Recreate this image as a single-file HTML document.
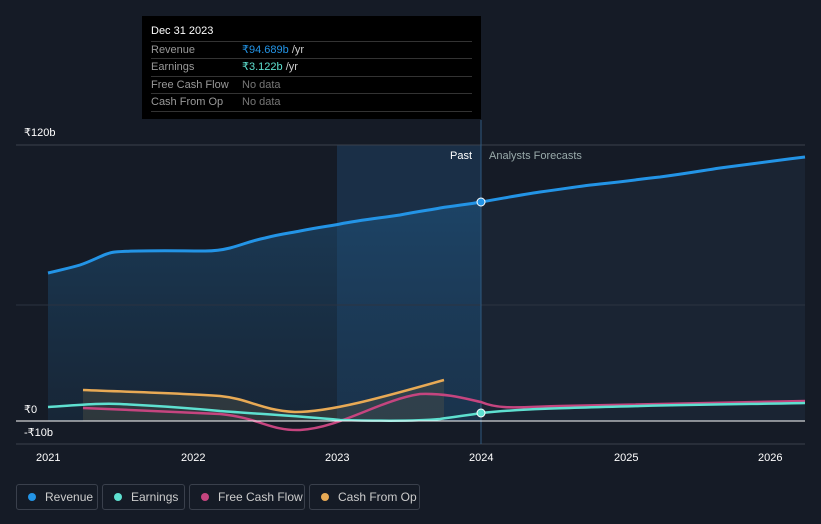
<!DOCTYPE html>
<html><head><style>
body{margin:0;background:#151b26;width:821px;height:524px;overflow:hidden;font-family:"Liberation Sans",sans-serif;}
.tt{position:absolute;left:142px;top:16px;width:339px;height:103px;background:#000;color:#ccc;font-size:11px}
.tt .h{color:#fff;font-size:11px;position:absolute;left:9px;top:9px}
.row{position:absolute;left:9px;width:321px;height:17px;border-top:1px solid #333;line-height:17px;color:#999}
.row span{position:absolute;left:91px}
.leg{position:absolute;top:484px;height:26px;border:1px solid #3a404c;border-radius:3px;color:#ccc;font-size:12px;line-height:24px;box-sizing:border-box}
.leg i{position:absolute;left:11px;top:8px;width:8px;height:8px;border-radius:50%}
.leg b{font-weight:normal;position:absolute;left:28px}
.ax{position:absolute;color:#fff;font-size:11px}
</style></head><body>
<svg width="821" height="524" style="position:absolute;left:0;top:0">
<defs><linearGradient id="g" x1="0" y1="0" x2="0" y2="1"><stop offset="0" stop-color="#1f5580" stop-opacity=".9"/><stop offset="1" stop-color="#1b3a55" stop-opacity=".6"/></linearGradient></defs>
<rect x="337" y="145" width="144" height="276" fill="#1b3550" opacity=".8"/>
<path d="M48,273 C60,270 70,268 80,265 C95,260 105,253 115,252 C140,250 180,251 205,251 C215,251 222,250 230,248 C245,244 250,241 265,238 C280,234 290,233 300,231 C320,227 330,226 340,224 C360,220 380,218 400,215 C420,211 430,210 440,208 C460,205 470,204 481,202 L481,421 L48,421Z" fill="url(#g)" opacity=".6"/>
<path d="M481,202 C510,197 520,195 540,192 C570,188 580,186 600,184 C630,181 640,179 660,177 C690,173 700,171 720,168 C760,163 780,160 805,157 L805,421 L481,421Z" fill="#1e2c3c" opacity=".6"/>
<line x1="16" y1="145" x2="805" y2="145" stroke="#3a404c"/>
<line x1="16" y1="305" x2="805" y2="305" stroke="#2c3340"/>
<line x1="16" y1="444" x2="805" y2="444" stroke="#3a404c"/>
<line x1="481" y1="120" x2="481" y2="444" stroke="#2f5a80"/>
<path d="M83,390 C130,392 180,393 220,396 C250,399 260,410 295,412 C330,412 380,398 444,380 L444,421 L83,421Z" fill="#5a5a48" opacity=".35"/>
<path d="M83,390 C130,392 180,393 220,396 C250,399 260,410 295,412 C330,412 380,398 444,380" fill="none" stroke="#e8aa55" stroke-width="2.5"/>
<path d="M83,408 C130,410 180,412 220,414 C260,418 270,431 300,430 C340,428 380,400 420,394 C450,393 470,400 481,402 C500,410 520,407 560,406 C640,404 720,402 805,401" fill="none" stroke="#c5457f" stroke-width="2.5"/>
<path d="M48,407 C80,405 100,403 120,404 C160,406 190,408 220,411 C260,414 300,416 340,420 C380,421 420,421 440,419 C460,416 470,415 481,413 C520,409 560,408 640,406 C720,404 760,404 805,403" fill="none" stroke="#5ee0d0" stroke-width="2.5"/>
<path d="M48,273 C60,270 70,268 80,265 C95,260 105,253 115,252 C140,250 180,251 205,251 C215,251 222,250 230,248 C245,244 250,241 265,238 C280,234 290,233 300,231 C320,227 330,226 340,224 C360,220 380,218 400,215 C420,211 430,210 440,208 C460,205 470,204 481,202 C510,197 520,195 540,192 C570,188 580,186 600,184 C630,181 640,179 660,177 C690,173 700,171 720,168 C760,163 780,160 805,157" fill="none" stroke="#2394e6" stroke-width="3"/>
<line x1="16" y1="421" x2="805" y2="421" stroke="#fff" stroke-width="1"/>
<circle cx="481" cy="202" r="4" fill="#2394e6" stroke="#fff" stroke-width="1"/>
<circle cx="481" cy="413" r="4" fill="#5ee0d0" stroke="#fff" stroke-width="1"/>
</svg>
<div class="ax" style="left:24px;top:126px">₹120b</div>
<div class="ax" style="left:24px;top:403px">₹0</div>
<div class="ax" style="left:24px;top:426px">-₹10b</div>
<div class="ax" style="left:36px;top:452px">2021</div>
<div class="ax" style="left:181px;top:452px">2022</div>
<div class="ax" style="left:325px;top:452px">2023</div>
<div class="ax" style="left:469px;top:452px">2024</div>
<div class="ax" style="left:614px;top:452px">2025</div>
<div class="ax" style="left:758px;top:452px">2026</div>
<div class="ax" style="left:450px;top:150px">Past</div>
<div class="ax" style="left:489px;top:150px;color:#9aa">Analysts Forecasts</div>
<div class="tt"><div class="h">Dec 31 2023</div>
<div class="row" style="top:25px">Revenue<span style="color:#2394e6">₹94.689b <span style="position:static;color:#ccc">/yr</span></span></div>
<div class="row" style="top:42px">Earnings<span style="color:#5ee0d0">₹3.122b <span style="position:static;color:#ccc">/yr</span></span></div>
<div class="row" style="top:60px">Free Cash Flow<span style="color:#777">No data</span></div>
<div class="row" style="top:77px;border-bottom:1px solid #333">Cash From Op<span style="color:#777">No data</span></div>
</div>
<div class="leg" style="left:16px;width:82px"><i style="background:#2394e6"></i><b>Revenue</b></div>
<div class="leg" style="left:102px;width:83px"><i style="background:#5ee0d0"></i><b>Earnings</b></div>
<div class="leg" style="left:189px;width:116px"><i style="background:#c5457f"></i><b>Free Cash Flow</b></div>
<div class="leg" style="left:309px;width:111px"><i style="background:#e8aa55"></i><b>Cash From Op</b></div>
</body></html>
